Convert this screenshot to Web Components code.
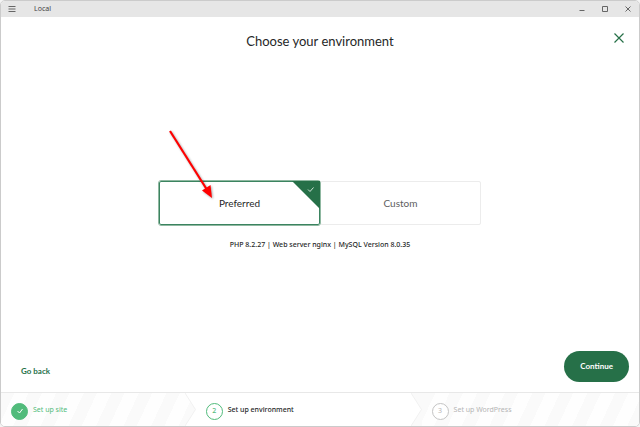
<!DOCTYPE html>
<html lang="en">
<head>
<meta charset="utf-8">
<title>Local</title>
<style>
    html, body {
        height: 100%;
        margin: 0;
    }
    body {
        background: #f4f4f4;
        color: #262727;
        font: 8px/12px Lato, "Open Sans", sans-serif;
    }
</style>
</head>
<body>
<app-window>
    <title-bar slot="bar">Local</title-bar>
    <env-page>
        <span slot="heading">Choose your environment</span>
        <env-picker></env-picker>
    </env-page>
    <step-list slot="steps">
        <step-item state="done">Set up site</step-item>
        <step-item state="current" number="2">Set up environment</step-item>
        <step-item state="next" number="3">Set up WordPress</step-item>
    </step-list>
</app-window>

<script>
function makeTemplate(html) {
    const template = document.createElement('template');
    template.innerHTML = html;
    return template;
}

const windowTemplate = makeTemplate(`
<slot name="bar"></slot>
<slot></slot>
<slot name="steps"></slot>
<style>
    :host {
        display: flex;
        flex-direction: column;
        box-sizing: border-box;
        min-height: 100%;
        border: 1px solid #cbcbcb;
        border-radius: 5px;
        background: #fff;
        overflow: hidden;
    }
</style>`);

const barTemplate = makeTemplate(`
<header>
    <button aria-label="Menu"><svg width="8" height="8" viewBox="0 0 8 8"><path d="M0.5 1.5h7M0.5 4h7M0.5 6.5h7"/></svg></button>
    <span><slot></slot></span>
    <nav>
        <button aria-label="Minimize"><svg width="8" height="8" viewBox="0 0 8 8"><path d="M1.5 5.5h5"/></svg></button>
        <button aria-label="Maximize"><svg width="8" height="8" viewBox="0 0 8 8"><path d="M1.5 1.5h5v5h-5z"/></svg></button>
        <button aria-label="Close"><svg width="8" height="8" viewBox="0 0 8 8"><path d="M1.5 1.5l5 5M6.5 1.5l-5 5"/></svg></button>
    </nav>
</header>
<style>
    :host {
        display: block;
        background: #e6e6e6;
        color: #444;
        font: 7px/16px "Noto Sans", sans-serif;
    }
    header {
        display: flex;
        align-items: center;
        padding: 0 7px;
        height: 16px;
    }
    span {
        flex: 1;
        padding-left: 18px;
    }
    nav {
        display: flex;
        gap: 15px;
    }
    button {
        display: flex;
        padding: 0;
        border: 0;
        background: none;
    }
    svg {
        fill: none;
        stroke: #666;
    }
</style>`);

const pageTemplate = makeTemplate(`
<header>
    <h1><slot name="heading"></slot></h1>
    <button class="close" aria-label="Close"><svg width="12" height="12" viewBox="0 0 12 12"><path d="M1.5 1.5l9 9M10.5 1.5l-9 9"/></svg></button>
</header>
<main><slot></slot></main>
<footer>
    <a href="#">Go back</a>
    <button class="continue">Continue</button>
</footer>
<style>
    :host {
        display: flex;
        flex: 1;
        flex-direction: column;
    }
    header {
        display: grid;
        grid-template-columns: 1fr auto 1fr;
        align-items: start;
        padding: 14px 14px 0;
    }
    h1 {
        grid-column: 2;
        margin: 0;
        font-size: 13px;
        font-weight: 400;
        line-height: 20px;
    }
    button {
        border: 0;
        font: inherit;
    }
    .close {
        display: flex;
        justify-self: end;
        padding: 1px 0;
        background: none;
    }
    .close svg {
        fill: none;
        stroke: #267048;
        stroke-width: 1.2;
    }
    main {
        display: flex;
        flex: 1;
        flex-direction: column;
        justify-content: center;
        padding-top: 30px;
    }
    footer {
        display: flex;
        align-items: center;
        justify-content: space-between;
        padding: 0 10px 10px 20px;
    }
    a {
        padding-top: 8px;
        color: #267048;
        font-weight: 700;
        text-decoration: none;
    }
    .continue {
        padding: 0 16px;
        border-radius: 16px;
        background: #267048;
        color: #fff;
        font-weight: 700;
        line-height: 31px;
    }
</style>`);

const pickerTemplate = makeTemplate(`
<div class="options" role="radiogroup" aria-label="Environment">
    <label>
        <input type="radio" name="env" checked>
        <span>Preferred</span>
        <svg class="corner" width="28" height="28" viewBox="0 0 28 28"><path d="M0 0h28v28z" fill="#267048"/><path d="M16 8.5l2 2 3.500-4" fill="none" stroke="#cfe3d7"/></svg>
        <svg class="arrow" width="60" height="80" viewBox="0 0 60 80">
            <path d="M10 10L46.500 68" stroke="#f00" stroke-width="2.200"/>
            <path d="M52 77L42 69.500 50.500 64z" fill="#f00"/>
        </svg>
    </label>
    <label>
        <input type="radio" name="env">
        <span>Custom</span>
    </label>
</div>
<p>PHP 8.2.27 | Web server nginx | MySQL Version 8.0.35</p>
<style>
    :host {
        display: block;
    }
    .options {
        display: grid;
        grid-template-columns: 1fr 1fr;
        width: 50%;
        min-width: 322px;
        margin: 0 auto;
    }
    label {
        position: relative;
        display: flex;
        align-items: center;
        justify-content: center;
        box-sizing: border-box;
        height: 44px;
        border: 1px solid #ececec;
        border-radius: 2px;
        color: #5d5e5e;
        font-size: 10px;
    }
    label:has(:checked) {
        z-index: 1;
        border-color: #3b8460;
        outline: 1px solid #8fb8a1;
        color: #262727;
    }
    input {
        position: absolute;
        opacity: 0;
    }
    .corner {
        position: absolute;
        top: -1px;
        right: -1px;
    }
    .arrow {
        position: absolute;
        left: 0;
        bottom: 23px;
        filter: drop-shadow(1px 1px 1px rgba(0, 0, 0, .35));
    }
    p {
        margin: 14px 0 0;
        font-family: "Noto Sans", sans-serif;
        font-size: 7px;
        font-weight: 500;
        text-align: center;
    }
</style>`);

const stepsTemplate = makeTemplate(`
<slot></slot>
<style>
    :host {
        display: flex;
        border-top: 1px solid #e8e8e8;
        font-family: "Noto Sans", sans-serif;
        font-size: 7px;
    }
    ::slotted(step-item) {
        flex: 219;
    }
    ::slotted(step-item:first-child) {
        flex: 195;
    }
    ::slotted(step-item[state="current"]) {
        flex: 228;
    }
</style>`);

const stepTemplate = makeTemplate(`
<i></i>
<span><slot></slot></span>
<svg class="tip" width="11" height="33" viewBox="0 0 11 33"><path class="out" d="M0 0L10.500 16.500 0 33H11V0z"/><path class="line" d="M0 0L10.500 16.500 0 33"/></svg>
<style>
    :host {
        --stripes: repeating-linear-gradient(115deg, #fafafa 0 12px, #fefefe 12px 25px);
        display: flex;
        align-items: center;
        height: 33px;
        padding-left: 10px;
        color: #b5b5b5;
        background: var(--stripes);
    }
    :host([state="done"]) {
        color: #51bb7b;
    }
    :host([state="current"]) {
        background: #fff;
        color: #262727;
        font-weight: 500;
    }
    i {
        display: flex;
        align-items: center;
        justify-content: center;
        box-sizing: border-box;
        width: 17px;
        height: 17px;
        margin-top: 3px;
        border: 1px solid #c4c4c4;
        border-radius: 50%;
        background: #fff;
        font-style: normal;
    }
    :host([state="done"]) i {
        border-color: #51bb7b;
        background: #51bb7b;
    }
    :host([state="current"]) i {
        border-color: #51bb7b;
        color: #51bb7b;
    }
    i svg {
        fill: none;
        stroke: #fff;
    }
    span {
        flex: 1;
        padding-left: 5px;
    }
    .tip path {
        fill: none;
    }
    .tip .line {
        stroke: #f1f1f1;
    }
    :host([state="done"]) .tip .out {
        fill: #fff;
    }
    :host([state="current"]) .tip .out {
        fill: #fafafa;
    }
    :host([state="next"]) .tip {
        display: none;
    }
</style>`);

class LocalElement extends HTMLElement {
    constructor(template) {
        super();
        this.attachShadow({ mode: 'open' });
        this.shadowRoot.appendChild(template.content.cloneNode(true));
    }
}

class AppWindow extends LocalElement {
    constructor() { super(windowTemplate); }
}

class TitleBar extends LocalElement {
    constructor() { super(barTemplate); }
}

class EnvPage extends LocalElement {
    constructor() { super(pageTemplate); }
}

class EnvPicker extends LocalElement {
    constructor() { super(pickerTemplate); }
}

class StepList extends LocalElement {
    constructor() { super(stepsTemplate); }
}

class StepItem extends LocalElement {
    constructor() { super(stepTemplate); }

    // finished steps show a tick instead of their number
    connectedCallback() {
        const badge = this.shadowRoot.querySelector('i');
        if (this.getAttribute('state') === 'done') {
            badge.innerHTML = '<svg width="8" height="8" viewBox="0 0 8 8"><path d="M1.500 4l2 2 3-4"/></svg>';
        } else {
            badge.innerText = this.getAttribute('number');
        }
    }
}

customElements.define('app-window', AppWindow);
customElements.define('title-bar', TitleBar);
customElements.define('env-page', EnvPage);
customElements.define('env-picker', EnvPicker);
customElements.define('step-list', StepList);
customElements.define('step-item', StepItem);
</script>
</body>
</html>
